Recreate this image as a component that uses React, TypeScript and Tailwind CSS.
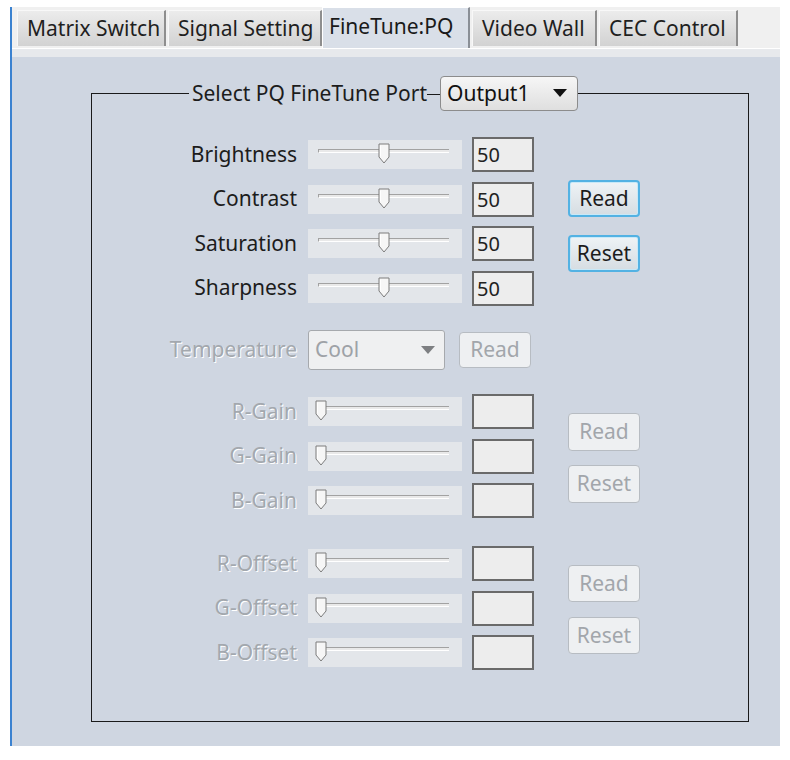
import React from "react";

const FONT = { fontFamily: '"Noto Sans", "Open Sans", sans-serif' };

function Thumb() {
  return (
    <svg width="12" height="21" viewBox="0 0 12 21">
      <path d="M1 1 H11 V14 L6 20 L1 14 Z" fill="#f6f6f6" stroke="#7c7c7c" strokeWidth="1" />
      <path d="M2.5 2.5 V13.5" stroke="#ffffff" strokeWidth="1" />
    </svg>
  );
}

function Slider({ pos }: { pos: number }) {
  return (
    <div className="relative w-[154px] h-[29px] bg-[#e3e6ea] shrink-0">
      <div className="absolute left-[10px] right-[13px] top-[9px] h-[4px] border-t border-l border-[#a2a2a2] border-b border-b-white bg-[#e9e9e9]" />
      <div className="absolute top-[3px]" style={{ left: pos }}>
        <Thumb />
      </div>
    </div>
  );
}

function Field({ value }: { value?: string }) {
  return (
    <div className="w-[62px] h-[35px] border-2 border-[#6a6a6a] bg-[#ededed] text-[20px] leading-[31px] pl-[3px] text-[#222] shrink-0">
      {value}
    </div>
  );
}

function Label({ text, disabled }: { text: string; disabled?: boolean }) {
  return (
    <div
      className={
        "w-[205px] text-right text-[21px] shrink-0 " +
        (disabled ? "text-[#a3a8ae] [text-shadow:1px_1px_0_#ffffff]" : "text-[#1c1c1c]")
      }
    >
      {text}
    </div>
  );
}

function Row({ label, disabled, value, pos, h }: { label: string; disabled?: boolean; value?: string; pos: number; h: string }) {
  return (
    <div className={"flex items-center " + h}>
      <Label text={label} disabled={disabled} />
      <div className="ml-[11px]">
        <Slider pos={pos} />
      </div>
      <div className="ml-[10px]">
        <Field value={value} />
      </div>
    </div>
  );
}

function ActiveButton({ text, mt }: { text: string; mt?: string }) {
  return (
    <div
      className={
        "w-[72px] h-[37px] rounded-[4px] border-2 border-[#53b2e3] bg-gradient-to-b from-[#eef3f6] to-[#d6dde2] shadow-[inset_0_0_0_1px_#c8e9f8] flex items-center justify-center text-[21px] text-[#1c1c1c] " +
        (mt || "")
      }
    >
      {text}
    </div>
  );
}

function DisabledButton({ text, mt, w = "w-[72px]", h = "h-[38px]" }: { text: string; mt?: string; w?: string; h?: string }) {
  return (
    <div
      className={
        w +
        " " +
        h +
        " rounded-[4px] border border-[#b7bcc2] bg-[#eef0f2] flex items-center justify-center text-[21px] text-[#a2a6ab] " +
        (mt || "")
      }
    >
      {text}
    </div>
  );
}

function Tab({ text, w, active }: { text: string; w: string; active?: boolean }) {
  if (active) {
    return (
      <div className={w + " h-[41px] bg-[#d9dfe8] border-t border-l border-[#ffffff] border-r-2 border-r-[#8a8f96] flex items-start pl-[6px] pt-[3px] text-[21px] text-[#1a1a1a]"}>
        {text}
      </div>
    );
  }
  return (
    <div
      className={
        w +
        " h-[36px] mb-[2px] bg-gradient-to-b from-[#ececec] to-[#d2d2d2] border-t border-l border-[#f8f8f8] border-r-2 border-r-[#8e8e8e] flex items-center pl-[9px] text-[21px] text-[#1f1f1f]"
      }
    >
      {text}
    </div>
  );
}

export default function App() {
  return (
    <div className="w-[790px] h-[760px] bg-white pt-[7px] pl-[10px]" style={FONT}>
      <div className="w-[770px] h-[739px] border-l-2 border-[#3b82d0] flex flex-col">
        <div className="h-[41px] bg-[#f0f0f0] flex items-end pl-[5px] gap-[2px]">
          <Tab text="Matrix Switch" w="w-[149px]" />
          <Tab text="Signal Setting" w="w-[154px]" />
          <div className="-ml-[2px]">
            <Tab text="FineTune:PQ" w="w-[148px]" active />
          </div>
          <Tab text="Video Wall" w="w-[125px]" />
          <Tab text="CEC Control" w="w-[139px]" />
        </div>
        <div className="h-[9px] bg-[#e7e9ec] border-t border-white" />
        <div className="flex-1 bg-[#cfd6e1] pt-[19px] pl-[79px]">
          <fieldset className="w-[658px] border border-[#1a1a1a] pb-[46px]">
            <legend className="ml-[97px] pl-[3px] flex items-center">
              <span className="text-[21px] text-[#1c1c1c]">Select PQ FineTune Port</span>
              <span className="w-[13px] h-px bg-[#1a1a1a] mt-[1px]" />
              <div className="w-[138px] h-[35px] rounded-[4px] border border-[#8c8c8c] bg-gradient-to-b from-[#f6f6f6] to-[#dfdfdf] flex items-center pl-[6px] text-[21px] text-[#111]">
                <span className="flex-1">Output1</span>
                <svg width="14" height="9" viewBox="0 0 14 9" className="mr-[10px]">
                  <path d="M0 0 H14 L7 8 Z" fill="#111" />
                </svg>
              </div>
            </legend>

            {/* Section 1 */}
            <div className="flex mt-[21px]">
              <div className="flex flex-col">
                <Row label="Brightness" value="50" pos={70} h="h-[45px]" />
                <Row label="Contrast" value="50" pos={70} h="h-[44px]" />
                <Row label="Saturation" value="50" pos={70} h="h-[45px]" />
                <Row label="Sharpness" value="50" pos={70} h="h-[44px]" />
              </div>
              <div className="ml-[34px] pt-[48px] flex flex-col">
                <ActiveButton text="Read" />
                <ActiveButton text="Reset" mt="mt-[18px]" />
              </div>
            </div>

            {/* Temperature */}
            <div className="flex items-center mt-[20px] h-[40px]">
              <Label text="Temperature" disabled />
              <div className="ml-[11px] w-[137px] h-[40px] rounded-[3px] border border-[#a6a9ad] bg-[#eff0f1] flex items-center pl-[6px] text-[21px] text-[#9ea2a7]">
                <span className="flex-1">Cool</span>
                <svg width="14" height="9" viewBox="0 0 14 9" className="mr-[9px]">
                  <path d="M0 0 H14 L7 8 Z" fill="#7d7f82" />
                </svg>
              </div>
              <div className="ml-[14px]">
                <DisabledButton text="Read" h="h-[36px]" />
              </div>
            </div>

            {/* Gain */}
            <div className="flex mt-[19px]">
              <div className="flex flex-col">
                <Row label="R-Gain" disabled pos={7} h="h-[45px]" />
                <Row label="G-Gain" disabled pos={7} h="h-[44px]" />
                <Row label="B-Gain" disabled pos={7} h="h-[45px]" />
              </div>
              <div className="ml-[34px] pt-[24px] flex flex-col">
                <DisabledButton text="Read" />
                <DisabledButton text="Reset" mt="mt-[14px]" />
              </div>
            </div>

            {/* Offset */}
            <div className="flex mt-[18px]">
              <div className="flex flex-col">
                <Row label="R-Offset" disabled pos={7} h="h-[45px]" />
                <Row label="G-Offset" disabled pos={7} h="h-[44px]" />
                <Row label="B-Offset" disabled pos={7} h="h-[45px]" />
              </div>
              <div className="ml-[34px] pt-[24px] flex flex-col">
                <DisabledButton text="Read" h="h-[37px]" />
                <DisabledButton text="Reset" h="h-[37px]" mt="mt-[15px]" />
              </div>
            </div>
          </fieldset>
        </div>
      </div>
    </div>
  );
}
